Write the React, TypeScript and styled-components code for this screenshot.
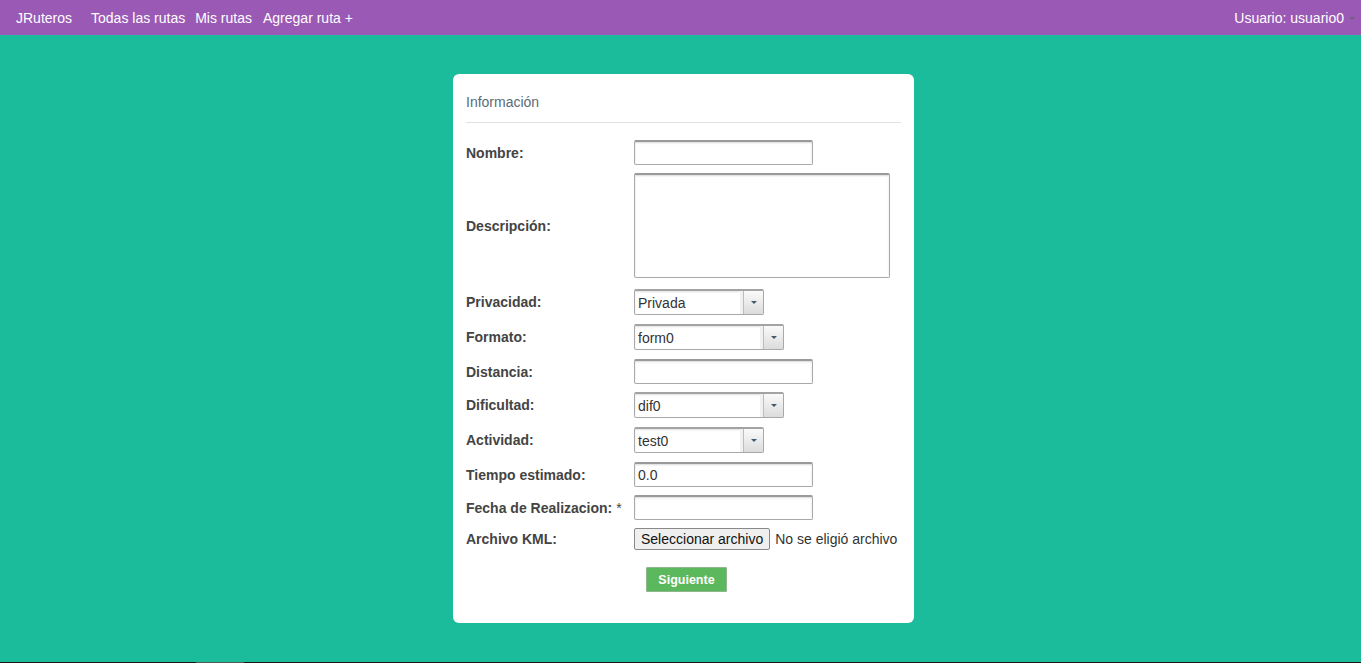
import { createGlobalStyle, styled } from "styled-components"

const GlobalStyle = createGlobalStyle`
  html, body {
    margin: 0;
    padding: 0;
  }
  body {
    font-family: "Liberation Sans", Arial, sans-serif;
    font-size: 14px;
    background: #1abc9c;
  }
`

interface RowProps {
  $top: number
}
interface WidthProps {
  $width: number
}
interface NavLinkProps {
  $left: number
}

const Page = styled.div`
  display: flex;
  flex-direction: column;
  height: 100vh;
  background: #1abc9c;
`
const NavBar = styled.nav`
  height: 35px;
  background: #9b59b6;
  display: flex;
  align-items: center;
  justify-content: space-between;
  padding: 0 6px 0 16px;
  color: #fff;
  flex-shrink: 0;
`
const NavLeft = styled.div`
  display: flex;
  align-items: center;
`
const Brand = styled.span`
  font-size: 14px;
  color: #fff;
`
const NavLink = styled.a<NavLinkProps>`
  margin-left: ${({ $left }) => $left}px;
  font-size: 14px;
  color: #fff;
  text-decoration: none;
`
const UserMenu = styled.div`
  display: flex;
  align-items: center;
  gap: 5px;
  font-size: 14px;
`
const Caret = styled.span`
  display: block;
  width: 0;
  height: 0;
  border-left: 3px solid transparent;
  border-right: 3px solid transparent;
  border-top: 3px solid #6b6478;
  margin-top: 1px;
`
const Main = styled.main`
  flex: 1;
  display: flex;
  justify-content: center;
  align-items: flex-start;
  padding: 39px 0 0 6px;
`
const Footer = styled.div`
  height: 1px;
  background: #1c1410;
  display: flex;
  flex-shrink: 0;
`
const FooterMark = styled.span`
  margin-left: 196px;
  width: 48px;
  background: #555;
`
const Card = styled.div`
  width: 461px;
  box-sizing: border-box;
  background: #fff;
  border-radius: 6px;
  padding: 18px 13px 31px;
`
const CardTitle = styled.div`
  font-size: 14px;
  line-height: 20px;
  color: #5b6b79;
  padding-bottom: 10px;
  border-bottom: 1px solid #dfe3e0;
`
const Form = styled.form`
  display: flex;
  flex-direction: column;
  padding-top: 17px;
`
const Row = styled.div<RowProps>`
  display: flex;
  align-items: center;
  margin-top: ${({ $top }) => $top}px;
`
const Label = styled.label`
  width: 168px;
  flex-shrink: 0;
  font-weight: bold;
  font-size: 14px;
  color: #444;
`
const TextInput = styled.div<WidthProps>`
  width: ${({ $width }) => $width}px;
  height: 25px;
  box-sizing: border-box;
  border: 1px solid #a9a9a9;
  border-top: 2px solid #9a9a9a;
  border-radius: 2px;
  box-shadow: inset 0 1px 2px rgba(0, 0, 0, 0.15);
  padding: 0 3px;
  display: flex;
  align-items: center;
  font-size: 14px;
  color: #333;
  background: #fff;
`
const TextArea = styled.div`
  width: 256px;
  height: 105px;
  box-sizing: border-box;
  border: 1px solid #a9a9a9;
  border-top: 2px solid #9a9a9a;
  border-radius: 2px;
  box-shadow: inset 0 1px 2px rgba(0, 0, 0, 0.15);
  background: #fff;
`
const Select = styled.div<WidthProps>`
  width: ${({ $width }) => $width}px;
  height: 26px;
  box-sizing: border-box;
  border: 1px solid #a9a9a9;
  border-top: 2px solid #a3a3a3;
  border-radius: 2px;
  box-shadow: inset 0 1px 2px rgba(0, 0, 0, 0.12);
  display: flex;
  background: #fff;
`
const SelectValue = styled.span`
  flex: 1;
  display: flex;
  align-items: center;
  padding-left: 3px;
  font-size: 14px;
  color: #333;
  border-right: 3px solid #f1f1f1;
`
const SelectButton = styled.span`
  width: 19px;
  border-left: 1px solid #bdbdbd;
  background: linear-gradient(#fafafa, #dcdcdc);
  display: flex;
  align-items: center;
  justify-content: center;
  &::after {
    content: "";
    border-left: 3px solid transparent;
    border-right: 3px solid transparent;
    border-top: 3px solid #3f5a6c;
  }
`
const Required = styled.span`
  font-weight: normal;
  margin-left: 4px;
`
const FileButton = styled.button`
  height: 22px;
  box-sizing: border-box;
  padding: 0 6px;
  border: 1px solid #8a8a8a;
  border-radius: 2px;
  background: #efefef;
  font-family: "Liberation Sans", Arial, sans-serif;
  font-size: 14px;
  color: #111;
`
const FileStatus = styled.span`
  margin-left: 5px;
  font-size: 14px;
  color: #333;
`
const SubmitButton = styled.button`
  margin: 17px 0 0 180px;
  width: 81px;
  height: 25px;
  box-sizing: border-box;
  align-self: flex-start;
  background: #5cb85c;
  border: 1px solid #8fb78f;
  border-radius: 1px;
  color: #fff;
  font-family: "Liberation Sans", Arial, sans-serif;
  font-weight: bold;
  font-size: 12.5px;
`

function FakeSelect({ value, width }: { value: string; width: number }) {
  return (
    <Select $width={width}>
      <SelectValue>{value}</SelectValue>
      <SelectButton />
    </Select>
  )
}

export default function App() {
  return (
    <Page>
      <GlobalStyle />
      <NavBar>
        <NavLeft>
          <Brand>JRuteros</Brand>
          <NavLink $left={19}>Todas las rutas</NavLink>
          <NavLink $left={10}>Mis rutas</NavLink>
          <NavLink $left={11}>Agregar ruta +</NavLink>
        </NavLeft>
        <UserMenu>
          Usuario: usuario0
          <Caret />
        </UserMenu>
      </NavBar>
      <Main>
        <Card>
          <CardTitle>Información</CardTitle>
          <Form>
            <Row $top={0}>
              <Label>Nombre:</Label>
              <TextInput $width={179} />
            </Row>
            <Row $top={8}>
              <Label>Descripción:</Label>
              <TextArea />
            </Row>
            <Row $top={11}>
              <Label>Privacidad:</Label>
              <FakeSelect value="Privada" width={130} />
            </Row>
            <Row $top={9}>
              <Label>Formato:</Label>
              <FakeSelect value="form0" width={150} />
            </Row>
            <Row $top={9}>
              <Label>Distancia:</Label>
              <TextInput $width={179} />
            </Row>
            <Row $top={8}>
              <Label>Dificultad:</Label>
              <FakeSelect value="dif0" width={150} />
            </Row>
            <Row $top={9}>
              <Label>Actividad:</Label>
              <FakeSelect value="test0" width={130} />
            </Row>
            <Row $top={9}>
              <Label>Tiempo estimado:</Label>
              <TextInput $width={179}>0.0</TextInput>
            </Row>
            <Row $top={8}>
              <Label>
                Fecha de Realizacion:<Required>*</Required>
              </Label>
              <TextInput $width={179} />
            </Row>
            <Row $top={8}>
              <Label>Archivo KML:</Label>
              <FileButton type="button">Seleccionar archivo</FileButton>
              <FileStatus>No se eligió archivo</FileStatus>
            </Row>
            <SubmitButton type="button">Siguiente</SubmitButton>
          </Form>
        </Card>
      </Main>
      <Footer>
        <FooterMark />
      </Footer>
    </Page>
  )
}
